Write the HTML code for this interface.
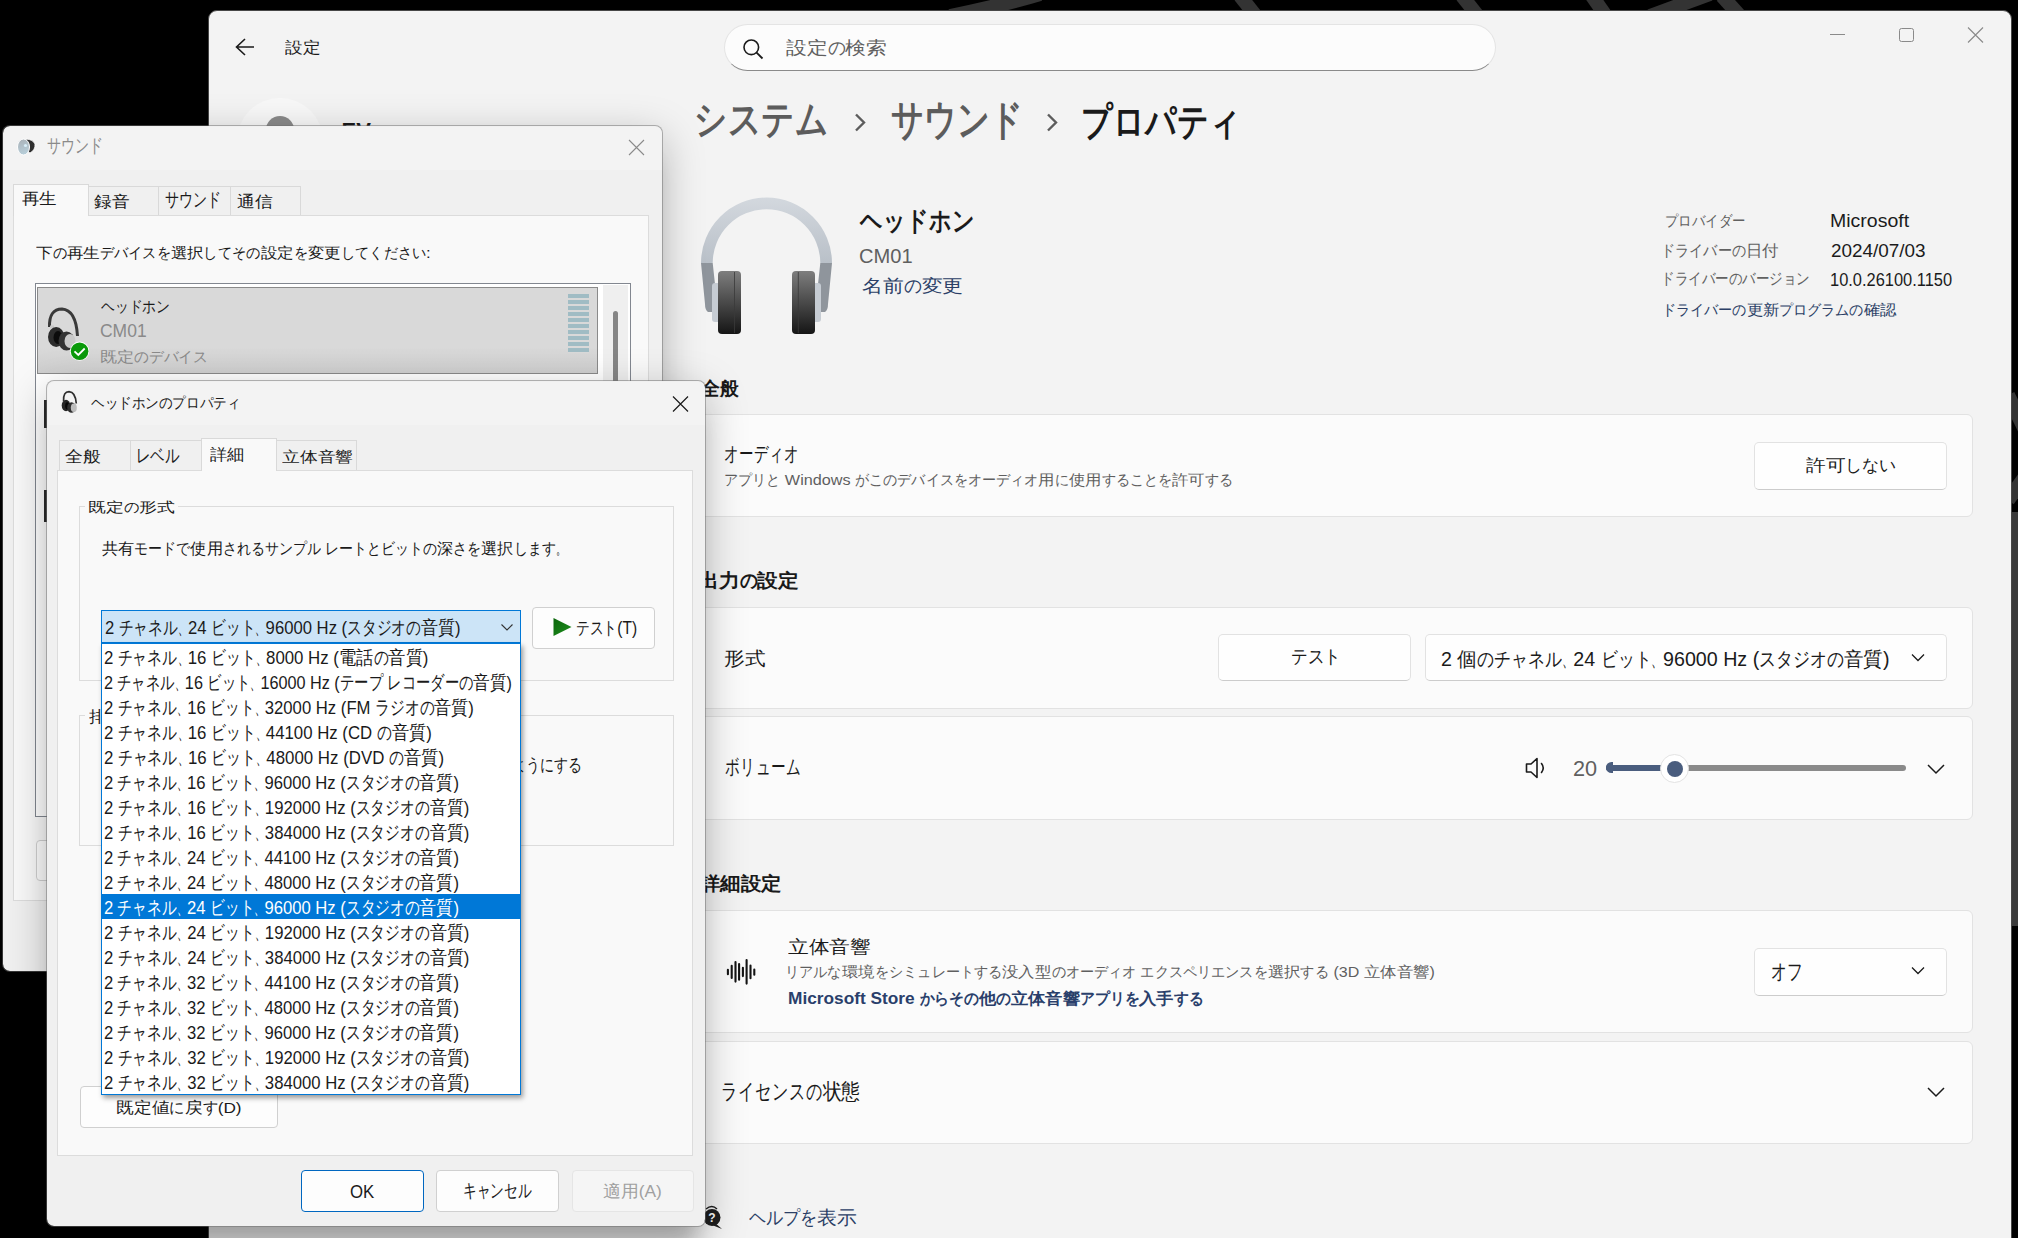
<!DOCTYPE html>
<html lang="ja"><head><meta charset="utf-8"><title>サウンド設定</title>
<style>
html,body{margin:0;padding:0}
body{width:2018px;height:1238px;overflow:hidden;background:#000;position:relative;font-family:"Liberation Sans",sans-serif;color:#1a1a1a}
.a{position:absolute;box-sizing:border-box}
.t{position:absolute;white-space:nowrap;line-height:1;font-style:normal;transform-origin:0 0;left:0;top:0}
/* settings */
#win{left:207.5px;top:10px;width:1804.5px;height:1260px;background:#f3f3f3;border:1.5px solid #474747;border-radius:9px;overflow:hidden}
.card{position:absolute;left:695px;width:1278px;background:#fbfbfb;border:1.5px solid #e2e2e2;border-radius:6px;box-sizing:border-box}
.btn11{position:absolute;background:#fefefe;border:1px solid #e2e2e2;border-bottom-color:#cccccc;border-radius:5px;box-sizing:border-box}
/* classic dialogs */
.dlg{position:absolute;box-sizing:border-box;border:1.5px solid rgba(110,110,110,.5);background-clip:padding-box;border-radius:8px;overflow:hidden;background-color:#f0f0f0;box-shadow:0 12px 42px rgba(0,0,0,.26),0 30px 20px -10px rgba(0,0,0,.18)}
.tab{position:absolute;box-sizing:border-box;background:#f0f0f0;border:1px solid #d9d9d9;border-bottom:none}
.tabsel{background:#f9f9f9}
.panel{position:absolute;box-sizing:border-box;background:#f9f9f9;border:1px solid #dcdcdc}
.gb{position:absolute;box-sizing:border-box;border:1px solid #dcdcdc}
.wbtn{position:absolute;box-sizing:border-box;background:#fdfdfd;border:1px solid #d0d0d0;border-radius:4px}
</style></head><body>

<!-- wallpaper strokes -->
<svg class="a" style="left:0;top:0" width="2018" height="1238">
 <g stroke="#333" stroke-width="14" fill="none">
  <path d="M950 16 Q1000 6 1040 -6"></path>
  <path d="M1240 -4 L1256 16"></path>
  <path d="M1462 -4 L1478 16"></path>
  <path d="M1592 -4 L1606 16"></path>
  <path d="M1650 16 L1710 -6"></path>
  <path d="M1722 -4 L1740 16"></path>
  <path d="M2008 395 L2030 440"></path>
  <path d="M2008 500 L2030 470"></path>
 </g>
</svg>

<div class="a" style="left:2011px;top:512px;width:7px;height:414px;background:#3a3a3a"></div>
<!-- SETTINGS WINDOW -->
<div id="win" class="a"></div>
<!-- title bar -->
<svg class="a" style="left:234px;top:37px" width="22" height="20" viewBox="0 0 22 20"><path d="M11 2 L2.5 10 L11 18 M2.5 10 H20" stroke="#1a1a1a" stroke-width="1.6" fill="none"></path></svg>
<i class="t" style="font-size: 16.16px; color: rgb(26, 26, 26); left: 284.82px; top: 39.04px; transform: scaleX(1.1043);">設定</i>
<!-- search -->
<div class="a" style="left:724px;top:24px;width:772px;height:47px;background:#fcfcfc;border:1px solid #e4e4e4;border-bottom:1.5px solid #8a8a8a;border-radius:24px"></div>
<svg class="a" style="left:742px;top:38px" width="22" height="22" viewBox="0 0 22 22"><circle cx="9.3" cy="9.3" r="7.3" stroke="#1a1a1a" stroke-width="1.6" fill="none"></circle><path d="M14.6 14.6 L20.5 20.5" stroke="#1a1a1a" stroke-width="1.8"></path></svg>
<i class="t" style="font-size: 18.49px; color: rgb(95, 95, 95); left: 785.79px; top: 39.05px; transform: scaleX(1.1539);">設定<span style="display: inline-block; width: 15.48px;"><span style="display: inline-block; transform: scaleX(0.86); transform-origin: 0px 0px;">の</span></span>検索</i>
<!-- window controls -->
<div class="a" style="left:1830px;top:34px;width:15px;height:1px;background:#8a8a8a"></div>
<div class="a" style="left:1899px;top:27.5px;width:15px;height:14.5px;border:1px solid #8a8a8a;border-radius:2.5px"></div>
<svg class="a" style="left:1967px;top:27px" width="17" height="16" viewBox="0 0 17 16"><path d="M1 0.5 L16 15.5 M16 0.5 L1 15.5" stroke="#8a8a8a" stroke-width="1.1"></path></svg>
<!-- nav avatar (mostly hidden) -->
<div class="a" style="left:237px;top:98px;width:86px;height:86px;border-radius:50%;background:#f8f8f8"></div>
<div class="a" style="left:266px;top:116px;width:28px;height:28px;border-radius:50%;background:#8a8a8a"></div>
<i class="t" style="font-size: 22px; font-weight: bold; color: rgb(26, 26, 26); left: 341.57px; top: 119.53px;">EV</i>
<!-- breadcrumb -->
<i class="t" style="font-size: 39.77px; font-weight: bold; color: rgb(92, 92, 92); left: 693.96px; top: 100.43px; transform: scaleX(0.9504);"><span style="display: inline-block; width: 141.04px;"><span style="display: inline-block; transform: scaleX(0.86); transform-origin: 0px 0px;">システム</span></span></i>
<svg class="a" style="left:853px;top:112px" width="14" height="21" viewBox="0 0 14 21"><path d="M3 2.5 L11 10.5 L3 18.5" stroke="#5c5c5c" stroke-width="2.4" fill="none"></path></svg>
<i class="t" style="font-size: 42px; font-weight: bold; color: rgb(92, 92, 92); left: 890.89px; top: 98.83px; transform: scaleX(0.8928);"><span style="display: inline-block; width: 147.92px;"><span style="display: inline-block; transform: scaleX(0.86); transform-origin: 0px 0px;">サウンド</span></span></i>
<svg class="a" style="left:1045px;top:112px" width="14" height="21" viewBox="0 0 14 21"><path d="M3 2.5 L11 10.5 L3 18.5" stroke="#5c5c5c" stroke-width="2.4" fill="none"></path></svg>
<i class="t" style="font-size: 39px; font-weight: bold; color: rgb(26, 26, 26); left: 1080.82px; top: 101.89px; transform: scaleX(0.9294);"><span style="display: inline-block; width: 172px;"><span style="display: inline-block; transform: scaleX(0.86); transform-origin: 0px 0px;">プロパティ</span></span></i>
<!-- headphone image -->
<svg class="a" style="left:696px;top:190px" width="142" height="150" viewBox="696 190 142 150">
 <defs>
  <linearGradient id="band" x1="0" y1="0" x2="0" y2="1"><stop offset="0" stop-color="#d3d8de"></stop><stop offset="1" stop-color="#b9c0c8"></stop></linearGradient>
  <linearGradient id="cup" x1="0" y1="0" x2="0" y2="1"><stop offset="0" stop-color="#7e7e7e"></stop><stop offset="1" stop-color="#151515"></stop></linearGradient>
 </defs>
 <path d="M701 263 A65.5 65.5 0 0 1 832 263 L820.3 263 A53.8 53.8 0 0 0 712.7 263 Z" fill="url(#band)"></path>
 <path d="M701 263 L712.7 263 L718 312 L708 312 Q705 310 705 304 Z" fill="#8f959c"></path>
 <path d="M832 263 L820.3 263 L815 312 L825 312 Q828 310 828 304 Z" fill="#8f959c"></path>
 <rect x="712" y="283" width="9" height="39" rx="3" fill="#c6ccd3"></rect>
 <rect x="812" y="283" width="9" height="39" rx="3" fill="#c6ccd3"></rect>
 <rect x="718" y="271" width="23" height="63" rx="4" fill="url(#cup)"></rect>
 <rect x="792" y="271" width="23" height="63" rx="4" fill="url(#cup)"></rect>
 <path d="M734.5 272 V333 M798.3 272 V333" stroke="#3a3a3a" stroke-width="0.8"></path>
</svg>
<i class="t" style="font-size: 26.92px; font-weight: bold; color: rgb(26, 26, 26); left: 860.14px; top: 207.78px; transform: scaleX(0.9528);"><span style="display: inline-block; width: 120.4px;"><span style="display: inline-block; transform: scaleX(0.86); transform-origin: 0px 0px;">ヘッドホン</span></span></i>
<i class="t" style="font-size: 20.7px; color: rgb(95, 95, 95); left: 859.49px; top: 245.95px; transform: scaleX(0.9715);">CM01</i>
<i class="t" style="font-size: 18.13px; color: rgb(43, 63, 102); left: 862.49px; top: 276.94px; transform: scaleX(1.1571);">名前<span style="display: inline-block; width: 15.48px;"><span style="display: inline-block; transform: scaleX(0.86); transform-origin: 0px 0px;">の</span></span>変更</i>
<!-- info -->
<i class="t" style="font-size: 15px; color: rgb(97, 97, 97); left: 1664.76px; top: 213.46px; transform: scaleX(1.0387);"><span style="display: inline-block; width: 77.4px;"><span style="display: inline-block; transform: scaleX(0.86); transform-origin: 0px 0px;">プロバイダー</span></span></i>
<i class="t" style="font-size: 16.15px; color: rgb(97, 97, 97); left: 1660.84px; top: 242.03px; transform: scaleX(1.0266);"><span style="display: inline-block; width: 82.56px;"><span style="display: inline-block; transform: scaleX(0.86); transform-origin: 0px 0px;">ドライバーの</span></span>日付</i>
<i class="t" style="font-size: 16.36px; color: rgb(97, 97, 97); left: 1660.99px; top: 270.32px; transform: scaleX(0.9818);"><span style="display: inline-block; width: 151.36px;"><span style="display: inline-block; transform: scaleX(0.86); transform-origin: 0px 0px;">ドライバーのバージョン</span></span></i>
<i class="t" style="font-size: 14.93px; color: rgb(43, 63, 102); left: 1662.42px; top: 302.96px; transform: scaleX(1.0929);"><span style="display: inline-block; width: 77.4px;"><span style="display: inline-block; transform: scaleX(0.86); transform-origin: 0px 0px;">ドライバーの</span></span>更新<span style="display: inline-block; width: 77.4px;"><span style="display: inline-block; transform: scaleX(0.86); transform-origin: 0px 0px;">プログラムの</span></span>確認</i>
<i class="t" style="font-size: 17.96px; color: rgb(27, 27, 27); left: 1830.04px; top: 212.8px; transform: scaleX(1.0865);">Microsoft</i>
<i class="t" style="font-size: 18.3px; color: rgb(27, 27, 27); left: 1830.65px; top: 242.16px; transform: scaleX(1.034);">2024/07/03</i>
<i class="t" style="font-size: 18.3px; color: rgb(27, 27, 27); left: 1830.37px; top: 271px; transform: scaleX(0.8987);">10.0.26100.1150</i>
<!-- sections -->
<i class="t" style="font-size: 18.87px; font-weight: bold; color: rgb(26, 26, 26); left: 701.28px; top: 379.86px; transform: scaleX(0.9902);">全般</i>
<div class="card" style="top:414px;height:103px"></div>
<i class="t" style="font-size: 20.82px; color: rgb(26, 26, 26); left: 724.21px; top: 443.55px; transform: scaleX(0.801);"><span style="display: inline-block; width: 93.74px;"><span style="display: inline-block; transform: scaleX(0.86); transform-origin: 0px 0px;">オーディオ</span></span></i>
<i class="t" style="font-size: 14.85px; color: rgb(95, 95, 95); left: 723.6px; top: 472.96px; transform: scaleX(1.0922);"><span style="display: inline-block; width: 51.6px;"><span style="display: inline-block; transform: scaleX(0.86); transform-origin: 0px 0px;">アプリと</span></span> Windows <span style="display: inline-block; width: 167.7px;"><span style="display: inline-block; transform: scaleX(0.86); transform-origin: 0px 0px;">がこのデバイスをオーディオ</span></span>用<span style="display: inline-block; width: 12.9px;"><span style="display: inline-block; transform: scaleX(0.86); transform-origin: 0px 0px;">に</span></span>使用<span style="display: inline-block; width: 64.5px;"><span style="display: inline-block; transform: scaleX(0.86); transform-origin: 0px 0px;">することを</span></span>許可<span style="display: inline-block; width: 25.8px;"><span style="display: inline-block; transform: scaleX(0.86); transform-origin: 0px 0px;">する</span></span></i>
<div class="btn11" style="left:1754px;top:442px;width:193px;height:48px"></div>
<i class="t" style="font-size: 17.14px; color: rgb(26, 26, 26); left: 1806.2px; top: 457.2px; transform: scaleX(1.1589);">許可<span style="display: inline-block; width: 43.86px;"><span style="display: inline-block; transform: scaleX(0.86); transform-origin: 0px 0px;">しない</span></span></i>

<i class="t" style="font-size: 19.23px; font-weight: bold; color: rgb(26, 26, 26); left: 698.05px; top: 571.43px; transform: scaleX(1.0932);">出力<span style="display: inline-block; width: 16.34px;"><span style="display: inline-block; transform: scaleX(0.86); transform-origin: 0px 0px;">の</span></span>設定</i>
<div class="card" style="top:607px;height:102px"></div>
<i class="t" style="font-size: 18.88px; color: rgb(26, 26, 26); left: 724.38px; top: 649.58px; transform: scaleX(1.0878);">形式</i>
<div class="btn11" style="left:1218px;top:634px;width:193px;height:47px"></div>
<i class="t" style="font-size: 19px; color: rgb(26, 26, 26); left: 1290.52px; top: 647.28px; transform: scaleX(1.0144);"><span style="display: inline-block; width: 49.02px;"><span style="display: inline-block; transform: scaleX(0.86); transform-origin: 0px 0px;">テスト</span></span></i>
<div class="btn11" style="left:1425px;top:634px;width:522px;height:47px"></div>
<i class="t" style="font-size: 20px; color: rgb(26, 26, 26); left: 1441.42px; top: 649.05px; transform: scaleX(0.9823);">2 個<span style="display: inline-block; width: 86px;"><span style="display: inline-block; transform: scaleX(0.86); transform-origin: 0px 0px;">のチャネル</span></span><span style="display: inline-block; width: 12px;"><span style="display: inline-block; transform: scaleX(0.6); transform-origin: 0px 0px;">、</span></span>24 <span style="display: inline-block; width: 51.6px;"><span style="display: inline-block; transform: scaleX(0.86); transform-origin: 0px 0px;">ビット</span></span><span style="display: inline-block; width: 12px;"><span style="display: inline-block; transform: scaleX(0.6); transform-origin: 0px 0px;">、</span></span>96000 Hz (<span style="display: inline-block; width: 86px;"><span style="display: inline-block; transform: scaleX(0.86); transform-origin: 0px 0px;">スタジオの</span></span>音質)</i>
<svg class="a" style="left:1910px;top:652px" width="16" height="12" viewBox="0 0 16 12"><path d="M2 2.5 L8 8.5 L14 2.5" stroke="#1a1a1a" stroke-width="1.3" fill="none"></path></svg>

<div class="card" style="top:716px;height:104px"></div>
<i class="t" style="font-size: 21.29px; color: rgb(26, 26, 26); left: 724.55px; top: 757.18px; transform: scaleX(0.8104);"><span style="display: inline-block; width: 93.74px;"><span style="display: inline-block; transform: scaleX(0.86); transform-origin: 0px 0px;">ボリューム</span></span></i>
<svg class="a" style="left:1523px;top:755px" width="26" height="26" viewBox="0 0 26 26"><path d="M3.5 9 H8 L14 3.5 V22.5 L8 17 H3.5 Z" stroke="#1a1a1a" stroke-width="1.6" fill="none" stroke-linejoin="round"></path><path d="M18.5 8.5 Q22 13 18.5 17.5" stroke="#1a1a1a" stroke-width="1.6" fill="none" stroke-linecap="round"></path></svg>
<i class="t" style="font-size: 21.69px; color: rgb(95, 95, 95); left: 1573.12px; top: 757.8px; transform: scaleX(0.9986);">20</i>
<div class="a" style="left:1606px;top:765px;width:300px;height:6px;border-radius:3px;background:#8a8a8a"></div>
<div class="a" style="left:1606px;top:765px;width:70px;height:6px;border-radius:3px;background:#4a5d7e"></div>
<div class="a" style="left:1606px;top:762px;width:6.5px;height:11px;border-radius:5.5px 0 0 5.5px;background:#4a5d7e"></div>
<div class="a" style="left:1660px;top:754px;width:29px;height:29px;border-radius:50%;background:#fff;border:1px solid #e3e3e3;box-sizing:border-box"></div>
<div class="a" style="left:1666.5px;top:760.5px;width:16px;height:16px;border-radius:50%;background:#4a5d7e"></div>
<svg class="a" style="left:1926px;top:762px" width="20" height="14" viewBox="0 0 20 14"><path d="M2 3 L10 11 L18 3" stroke="#1a1a1a" stroke-width="1.5" fill="none"></path></svg>

<i class="t" style="font-size: 19.23px; font-weight: bold; color: rgb(26, 26, 26); left: 700.1px; top: 874.43px; transform: scaleX(1.0726);">詳細設定</i>
<div class="card" style="top:910px;height:123px"></div>
<svg class="a" style="left:715px;top:950px" width="55" height="45" viewBox="0 0 55 45"><path d="M12.9 19.7 V24.3 M16.7 15.7 V27.9 M20.5 12.1 V31.6 M24.1 14.1 V29.7 M27.9 17.7 V26.1 M31.6 10.1 V33.6 M35.5 15.5 V28.3 M39.3 19.5 V24.7" stroke="#141414" stroke-width="2.1" stroke-linecap="round" fill="none"></path></svg>
<i class="t" style="font-size: 17.66px; color: rgb(26, 26, 26); left: 788px; top: 938.84px; transform: scaleX(1.1502);">立体音響</i>
<i class="t" style="font-size: 14.62px; color: rgb(95, 95, 95); left: 785.13px; top: 964.84px; transform: scaleX(1.0968);"><span style="display: inline-block; width: 51.6px;"><span style="display: inline-block; transform: scaleX(0.86); transform-origin: 0px 0px;">リアルな</span></span>環境<span style="display: inline-block; width: 116.1px;"><span style="display: inline-block; transform: scaleX(0.86); transform-origin: 0px 0px;">をシミュレートする</span></span>没入型<span style="display: inline-block; width: 77.4px;"><span style="display: inline-block; transform: scaleX(0.86); transform-origin: 0px 0px;">のオーディオ</span></span> <span style="display: inline-block; width: 116.1px;"><span style="display: inline-block; transform: scaleX(0.86); transform-origin: 0px 0px;">エクスペリエンスを</span></span>選択<span style="display: inline-block; width: 25.8px;"><span style="display: inline-block; transform: scaleX(0.86); transform-origin: 0px 0px;">する</span></span> (3D 立体音響)</i>
<i class="t" style="font-size: 16px; font-weight: bold; color: rgb(42, 63, 107); left: 788.48px; top: 991.44px; transform: scaleX(1.0787);">Microsoft Store <span style="display: inline-block; width: 55.04px;"><span style="display: inline-block; transform: scaleX(0.86); transform-origin: 0px 0px;">からその</span></span>他<span style="display: inline-block; width: 13.76px;"><span style="display: inline-block; transform: scaleX(0.86); transform-origin: 0px 0px;">の</span></span>立体音響<span style="display: inline-block; width: 55.04px;"><span style="display: inline-block; transform: scaleX(0.86); transform-origin: 0px 0px;">アプリを</span></span>入手<span style="display: inline-block; width: 27.52px;"><span style="display: inline-block; transform: scaleX(0.86); transform-origin: 0px 0px;">する</span></span></i>
<div class="btn11" style="left:1754px;top:948px;width:193px;height:48px"></div>
<i class="t" style="font-size: 21.83px; color: rgb(26, 26, 26); left: 1770.54px; top: 960.7px; transform: scaleX(0.8305);"><span style="display: inline-block; width: 39.56px;"><span style="display: inline-block; transform: scaleX(0.86); transform-origin: 0px 0px;">オフ</span></span></i>
<svg class="a" style="left:1910px;top:965px" width="16" height="12" viewBox="0 0 16 12"><path d="M2 2.5 L8 8.5 L14 2.5" stroke="#1a1a1a" stroke-width="1.3" fill="none"></path></svg>

<div class="card" style="top:1041px;height:103px"></div>
<i class="t" style="font-size: 21.85px; color: rgb(26, 26, 26); left: 721.41px; top: 1081.43px; transform: scaleX(0.8556);"><span style="display: inline-block; width: 118.68px;"><span style="display: inline-block; transform: scaleX(0.86); transform-origin: 0px 0px;">ライセンスの</span></span>状態</i>
<svg class="a" style="left:1926px;top:1085px" width="20" height="14" viewBox="0 0 20 14"><path d="M2 3 L10 11 L18 3" stroke="#1a1a1a" stroke-width="1.5" fill="none"></path></svg>

<svg class="a" style="left:700px;top:1202px" width="24" height="30" viewBox="0 0 24 30"><circle cx="12" cy="15.5" r="8.5" fill="#1f1f1f"></circle><path d="M14 20 L22 27 L12 23 Z" fill="#1f1f1f"></path><path d="M6 7 Q12 2 17 7" stroke="#1f1f1f" stroke-width="1.4" fill="none"></path><text x="12" y="20" font-size="12" font-weight="bold" text-anchor="middle" fill="#fff" font-family="Liberation Sans">?</text></svg>
<i class="t" style="font-size: 19.21px; color: rgb(43, 63, 102); left: 748.71px; top: 1207.95px; transform: scaleX(1.0446);"><span style="display: inline-block; width: 65.36px;"><span style="display: inline-block; transform: scaleX(0.86); transform-origin: 0px 0px;">ヘルプを</span></span>表示</i>


<!-- SOUND DIALOG -->
<div id="snd" class="dlg" style="left:2px;top:125px;width:661px;height:847px"></div>
<div class="a" style="left:3.5px;top:126.5px;width:658px;height:43.5px;background:#f3f3f3;border-radius:7px 7px 0 0"></div>
<svg class="a" style="left:14px;top:134px" width="24" height="26" viewBox="14 134 24 26">
 <defs><linearGradient id="cone" x1="0" y1="0" x2="0.3" y2="1"><stop offset="0" stop-color="#a9b0b6"></stop><stop offset="1" stop-color="#b7cdd8"></stop></linearGradient></defs>
 <path d="M26 139 Q33 139.5 35 144 Q35.5 150 30 153 L27 151 Z" fill="#2e2e2e" stroke="#fff" stroke-width="0.8"></path>
 <ellipse cx="23.5" cy="147" rx="6" ry="8" fill="url(#cone)" stroke="#fff" stroke-width="1"></ellipse>
 <circle cx="25.5" cy="145.5" r="1.6" fill="#d8eef8"></circle>
</svg>
<i class="t" style="font-size: 18.66px; color: rgb(138, 138, 138); left: 47.05px; top: 136.59px; transform: scaleX(0.856);"><span style="display: inline-block; width: 65.36px;"><span style="display: inline-block; transform: scaleX(0.86); transform-origin: 0px 0px;">サウンド</span></span></i>
<svg class="a" style="left:628px;top:139px" width="17" height="17" viewBox="0 0 17 17"><path d="M1 1 L16 16 M16 1 L1 16" stroke="#8a8a8a" stroke-width="1.1"></path></svg>
<!-- tabs -->
<div class="panel" style="left:13px;top:215px;width:636px;height:686px"></div>
<div class="tab" style="left:88px;top:186px;width:71px;height:29px"></div>
<div class="tab" style="left:158px;top:186px;width:73px;height:29px"></div>
<div class="tab" style="left:230px;top:186px;width:71px;height:29px"></div>
<div class="tab tabsel" style="left:13px;top:184px;width:76px;height:32px"></div>
<i class="t" style="font-size: 15.81px; color: rgb(26, 26, 26); left: 21.74px; top: 191.34px; transform: scaleX(1.0922);">再生</i>
<i class="t" style="font-size: 16.12px; color: rgb(26, 26, 26); left: 93.51px; top: 193.34px; transform: scaleX(1.1031);">録音</i>
<i class="t" style="font-size: 18.55px; color: rgb(26, 26, 26); left: 165.15px; top: 190.6px; transform: scaleX(0.8558);"><span style="display: inline-block; width: 65.36px;"><span style="display: inline-block; transform: scaleX(0.86); transform-origin: 0px 0px;">サウンド</span></span></i>
<i class="t" style="font-size: 16.37px; color: rgb(26, 26, 26); left: 236.94px; top: 193.01px; transform: scaleX(1.1126);">通信</i>
<i class="t" style="font-size: 15.22px; color: rgb(26, 26, 26); left: 36.15px; top: 244.61px; transform: scaleX(1.1012);">下<span style="display: inline-block; width: 12.9px;"><span style="display: inline-block; transform: scaleX(0.86); transform-origin: 0px 0px;">の</span></span>再生<span style="display: inline-block; width: 64.5px;"><span style="display: inline-block; transform: scaleX(0.86); transform-origin: 0px 0px;">デバイスを</span></span>選択<span style="display: inline-block; width: 51.6px;"><span style="display: inline-block; transform: scaleX(0.86); transform-origin: 0px 0px;">してその</span></span>設定<span style="display: inline-block; width: 12.9px;"><span style="display: inline-block; transform: scaleX(0.86); transform-origin: 0px 0px;">を</span></span>変更<span style="display: inline-block; width: 77.4px;"><span style="display: inline-block; transform: scaleX(0.86); transform-origin: 0px 0px;">してください</span></span>:</i>
<!-- listbox -->
<div class="a" style="left:35px;top:283px;width:596px;height:534px;background:#fff;border:1px solid #828790"></div>
<div class="a" style="left:603px;top:285px;width:25px;height:531px;background:#efefef"></div>
<div class="a" style="left:613px;top:311px;width:5px;height:520px;background:#858585;border-radius:3px"></div>
<div class="a" style="left:37px;top:287px;width:561px;height:87px;background:linear-gradient(#d9d9d9 70%,#cfcfcf);border:1px solid #8a8a8a"></div>
<div class="a" style="left:568px;top:294px;width:21px;height:59px;background:repeating-linear-gradient(#a0bcc4 0 4px,#d9d9d9 4px 6px)"></div>
<svg class="a" style="left:44px;top:304px" width="46" height="58" viewBox="44 304 46 58">
 <path d="M49.5 327 Q49 309 62 309 Q76 310 77.5 336" stroke="#3a3a3a" stroke-width="3" fill="none"></path>
 <path d="M50 327 L54 327" stroke="#c8c8c8" stroke-width="3"></path>
 <ellipse cx="56.2" cy="337" rx="8.2" ry="9.9" fill="#2c2c2c"></ellipse>
 <ellipse cx="58" cy="337.5" rx="4.5" ry="6.5" fill="#0c0c0c"></ellipse>
 <ellipse cx="66.5" cy="341" rx="8" ry="9.5" fill="#333"></ellipse>
 <ellipse cx="70" cy="341" rx="5.5" ry="7" fill="#c9c9c9"></ellipse>
 <circle cx="79.6" cy="351.2" r="9.6" fill="#fff"></circle>
 <circle cx="79.6" cy="351.2" r="8.8" fill="#0a9a0a"></circle>
 <path d="M74.5 351.3 L78.3 355 L84.7 348.5" stroke="#fff" stroke-width="1.8" fill="none"></path>
</svg>
<i class="t" style="font-size: 16.34px; color: rgb(26, 26, 26); left: 101.23px; top: 298.02px; transform: scaleX(1.0036);"><span style="display: inline-block; width: 68.8px;"><span style="display: inline-block; transform: scaleX(0.86); transform-origin: 0px 0px;">ヘッドホン</span></span></i>
<i class="t" style="font-size: 18.31px; color: rgb(138, 138, 138); left: 100.43px; top: 322.3px; transform: scaleX(0.9547);">CM01</i>
<i class="t" style="font-size: 15.05px; color: rgb(138, 138, 138); left: 100.27px; top: 348.64px; transform: scaleX(1.1397);">既定<span style="display: inline-block; width: 64.5px;"><span style="display: inline-block; transform: scaleX(0.86); transform-origin: 0px 0px;">のデバイス</span></span></i>
<div class="a" style="left:44px;top:400px;width:3px;height:28px;background:#2a2a2a"></div>
<div class="a" style="left:44px;top:490px;width:3px;height:32px;background:#2a2a2a"></div>
<div class="wbtn" style="left:36px;top:840px;width:120px;height:41px"></div>

<!-- PROPERTIES DIALOG -->
<div id="prop" class="dlg" style="left:46px;top:380px;width:660px;height:847px"></div>
<div class="a" style="left:47.5px;top:381.5px;width:657px;height:43.5px;background:#f3f3f3;border-radius:7px 7px 0 0"></div>
<svg class="a" style="left:58px;top:389px" width="24" height="27" viewBox="58 389 24 27">
 <path d="M63.6 401 Q63.2 391.6 69 391.6 Q75.5 392 76.3 403.5" stroke="#2e2e2e" stroke-width="1.7" fill="none"></path>
 <ellipse cx="66" cy="405.5" rx="4.3" ry="5.8" fill="#262626"></ellipse>
 <ellipse cx="67.3" cy="405.8" rx="2.2" ry="3.6" fill="#080808"></ellipse>
 <ellipse cx="71.5" cy="407.5" rx="4.3" ry="5.3" fill="#2e2e2e"></ellipse>
 <ellipse cx="73.8" cy="407.8" rx="3" ry="4.3" fill="#bdbdbd"></ellipse>
</svg>
<i class="t" style="font-size: 15.38px; color: rgb(26, 26, 26); left: 91.43px; top: 394.96px; transform: scaleX(1.0518);"><span style="display: inline-block; width: 141.9px;"><span style="display: inline-block; transform: scaleX(0.86); transform-origin: 0px 0px;">ヘッドホンのプロパティ</span></span></i>
<svg class="a" style="left:672px;top:395.5px" width="17" height="16" viewBox="0 0 17 16"><path d="M1 0.5 L16 15.5 M16 0.5 L1 15.5" stroke="#1a1a1a" stroke-width="1.2"></path></svg>
<div class="panel" style="left:57px;top:470px;width:636px;height:686px"></div>
<div class="tab" style="left:59px;top:440px;width:72px;height:30px"></div>
<div class="tab" style="left:130px;top:440px;width:72px;height:30px"></div>
<div class="tab" style="left:276px;top:440px;width:81px;height:30px"></div>
<div class="tab tabsel" style="left:201px;top:438px;width:76px;height:33px"></div>
<i class="t" style="font-size: 16.24px; color: rgb(26, 26, 26); left: 65.43px; top: 447.97px; transform: scaleX(1.1158);">全般</i>
<i class="t" style="font-size: 19.24px; color: rgb(26, 26, 26); left: 135.85px; top: 446.05px; transform: scaleX(0.8861);"><span style="display: inline-block; width: 49.02px;"><span style="display: inline-block; transform: scaleX(0.86); transform-origin: 0px 0px;">レベル</span></span></i>
<i class="t" style="font-size: 16.17px; color: rgb(26, 26, 26); left: 210.03px; top: 446.02px; transform: scaleX(1.0775);">詳細</i>
<i class="t" style="font-size: 15.33px; color: rgb(26, 26, 26); left: 281.63px; top: 448.54px; transform: scaleX(1.185);">立体音響</i>
<!-- group 1 -->
<div class="gb" style="left:79px;top:506px;width:595px;height:175px"></div>
<div class="a" style="left:85px;top:498px;width:93px;height:18px;background:#f9f9f9"></div>
<i class="t" style="font-size: 14.46px; color: rgb(26, 26, 26); left: 87.79px; top: 499.94px; transform: scaleX(1.2773);">既定<span style="display: inline-block; width: 12.04px;"><span style="display: inline-block; transform: scaleX(0.86); transform-origin: 0px 0px;">の</span></span>形式</i>
<i class="t" style="font-size: 16.41px; color: rgb(26, 26, 26); left: 101.75px; top: 539.96px; transform: scaleX(1.0147);">共有<span style="display: inline-block; width: 55.04px;"><span style="display: inline-block; transform: scaleX(0.86); transform-origin: 0px 0px;">モードで</span></span>使用<span style="display: inline-block; width: 96.32px;"><span style="display: inline-block; transform: scaleX(0.86); transform-origin: 0px 0px;">されるサンプル</span></span> <span style="display: inline-block; width: 110.08px;"><span style="display: inline-block; transform: scaleX(0.86); transform-origin: 0px 0px;">レートとビットの</span></span>深<span style="display: inline-block; width: 27.52px;"><span style="display: inline-block; transform: scaleX(0.86); transform-origin: 0px 0px;">さを</span></span>選択<span style="display: inline-block; width: 41.28px;"><span style="display: inline-block; transform: scaleX(0.86); transform-origin: 0px 0px;">します</span></span><span style="display: inline-block; width: 9.6px;"><span style="display: inline-block; transform: scaleX(0.6); transform-origin: 0px 0px;">。</span></span></i>
<div class="a" style="left:101px;top:610px;width:420px;height:33px;background:#cce4f7;border:1px solid #0078d7"></div>
<i class="t" style="font-size: 18.5px; color: rgb(26, 26, 26); left: 104.57px; top: 619.32px; transform: scaleX(0.9008);">2 <span style="display: inline-block; width: 65.36px;"><span style="display: inline-block; transform: scaleX(0.86); transform-origin: 0px 0px;">チャネル</span></span><span style="display: inline-block; width: 11.4px;"><span style="display: inline-block; transform: scaleX(0.6); transform-origin: 0px 0px;">、</span></span>24 <span style="display: inline-block; width: 49.02px;"><span style="display: inline-block; transform: scaleX(0.86); transform-origin: 0px 0px;">ビット</span></span><span style="display: inline-block; width: 11.4px;"><span style="display: inline-block; transform: scaleX(0.6); transform-origin: 0px 0px;">、</span></span>96000 Hz (<span style="display: inline-block; width: 81.7px;"><span style="display: inline-block; transform: scaleX(0.86); transform-origin: 0px 0px;">スタジオの</span></span>音質)</i>
<svg class="a" style="left:500px;top:622px" width="14" height="10" viewBox="0 0 14 10"><path d="M1.5 2.5 L7 8 L12.5 2.5" stroke="#333" stroke-width="1.1" fill="none"></path></svg>
<div class="wbtn" style="left:531.5px;top:607px;width:123px;height:42px"></div>
<svg class="a" style="left:552px;top:617px" width="21" height="20" viewBox="0 0 21 20"><defs><linearGradient id="gtri" x1="0" y1="0" x2="1" y2="1"><stop offset="0" stop-color="#0a650a"></stop><stop offset="1" stop-color="#1f8f1f"></stop></linearGradient></defs><path d="M1.5 1 L19.5 10 L1.5 19 Z" fill="url(#gtri)"></path></svg>
<i class="t" style="font-size: 17.5px; color: rgb(26, 26, 26); left: 575.83px; top: 620.17px; transform: scaleX(0.888);"><span style="display: inline-block; width: 46.44px;"><span style="display: inline-block; transform: scaleX(0.86); transform-origin: 0px 0px;">テスト</span></span>(T)</i>
<!-- group 2 -->
<div class="gb" style="left:79px;top:715px;width:595px;height:131px"></div>
<div class="a" style="left:85px;top:707px;width:20px;height:18px;background:#f9f9f9"></div>
<i class="t" style="font-size: 15.5px; color: rgb(26, 26, 26); left: 89px; top: 708.57px; transform: scaleX(1.1961);">排他<span style="display: inline-block; width: 41.28px;"><span style="display: inline-block; transform: scaleX(0.86); transform-origin: 0px 0px;">モード</span></span></i>
<i class="t" style="font-size: 17.5px; color: rgb(26, 26, 26); left: 512.37px; top: 757.34px; transform: scaleX(0.9017);"><span style="display: inline-block; width: 77.4px;"><span style="display: inline-block; transform: scaleX(0.86); transform-origin: 0px 0px;">ようにする</span></span></i>
<div class="wbtn" style="left:80px;top:1086px;width:198px;height:42px"></div>
<i class="t" style="font-size: 15.5px; color: rgb(26, 26, 26); left: 116.47px; top: 1100.04px; transform: scaleX(1.1109);">既定値<span style="display: inline-block; width: 13.76px;"><span style="display: inline-block; transform: scaleX(0.86); transform-origin: 0px 0px;">に</span></span>戻<span style="display: inline-block; width: 13.76px;"><span style="display: inline-block; transform: scaleX(0.86); transform-origin: 0px 0px;">す</span></span>(D)</i>
<div class="wbtn" style="left:301px;top:1170px;width:123px;height:42px;border-color:#0067c0"></div>
<i class="t" style="font-size: 19.01px; color: rgb(26, 26, 26); left: 349.84px; top: 1182.1px; transform: scaleX(0.8842);">OK</i>
<div class="wbtn" style="left:436px;top:1170px;width:123px;height:42px"></div>
<i class="t" style="font-size: 19.42px; color: rgb(26, 26, 26); left: 462.64px; top: 1180.92px; transform: scaleX(0.8404);"><span style="display: inline-block; width: 81.7px;"><span style="display: inline-block; transform: scaleX(0.86); transform-origin: 0px 0px;">キャンセル</span></span></i>
<div class="wbtn" style="left:571.5px;top:1170px;width:122px;height:42px;background:#f5f5f5;border-color:#e5e5e5"></div>
<i class="t" style="font-size: 16.5px; color: rgb(160, 160, 160); left: 602.87px; top: 1183.24px; transform: scaleX(1.0489);">適用(A)</i>

<!-- DROPDOWN LIST -->
<div id="list" class="a" style="left:101px;top:643px;width:420px;height:452px;background:#fff;border:1px solid #0078d7;box-shadow:2px 3px 5px rgba(0,0,0,.38)"></div>
<div class="a" style="left:102px;top:894px;width:418px;height:25px;background:#0078d7"></div>
<i class="t" style="font-size: 18.5px; color: rgb(26, 26, 26); left: 103.96px; top: 649.32px; transform: scaleX(0.9087);">2 <span style="display: inline-block; width: 65.36px;"><span style="display: inline-block; transform: scaleX(0.86); transform-origin: 0px 0px;">チャネル</span></span><span style="display: inline-block; width: 11.4px;"><span style="display: inline-block; transform: scaleX(0.6); transform-origin: 0px 0px;">、</span></span>16 <span style="display: inline-block; width: 49.02px;"><span style="display: inline-block; transform: scaleX(0.86); transform-origin: 0px 0px;">ビット</span></span><span style="display: inline-block; width: 11.4px;"><span style="display: inline-block; transform: scaleX(0.6); transform-origin: 0px 0px;">、</span></span>8000 Hz (電話<span style="display: inline-block; width: 16.34px;"><span style="display: inline-block; transform: scaleX(0.86); transform-origin: 0px 0px;">の</span></span>音質)</i>
<i class="t" style="font-size: 18.5px; color: rgb(26, 26, 26); left: 103.99px; top: 674.32px; transform: scaleX(0.8771);">2 <span style="display: inline-block; width: 65.36px;"><span style="display: inline-block; transform: scaleX(0.86); transform-origin: 0px 0px;">チャネル</span></span><span style="display: inline-block; width: 11.4px;"><span style="display: inline-block; transform: scaleX(0.6); transform-origin: 0px 0px;">、</span></span>16 <span style="display: inline-block; width: 49.02px;"><span style="display: inline-block; transform: scaleX(0.86); transform-origin: 0px 0px;">ビット</span></span><span style="display: inline-block; width: 11.4px;"><span style="display: inline-block; transform: scaleX(0.6); transform-origin: 0px 0px;">、</span></span>16000 Hz (<span style="display: inline-block; width: 49.02px;"><span style="display: inline-block; transform: scaleX(0.86); transform-origin: 0px 0px;">テープ</span></span> <span style="display: inline-block; width: 98.04px;"><span style="display: inline-block; transform: scaleX(0.86); transform-origin: 0px 0px;">レコーダーの</span></span>音質)</i>
<i class="t" style="font-size: 18.5px; color: rgb(26, 26, 26); left: 103.97px; top: 699.32px; transform: scaleX(0.9017);">2 <span style="display: inline-block; width: 65.36px;"><span style="display: inline-block; transform: scaleX(0.86); transform-origin: 0px 0px;">チャネル</span></span><span style="display: inline-block; width: 11.4px;"><span style="display: inline-block; transform: scaleX(0.6); transform-origin: 0px 0px;">、</span></span>16 <span style="display: inline-block; width: 49.02px;"><span style="display: inline-block; transform: scaleX(0.86); transform-origin: 0px 0px;">ビット</span></span><span style="display: inline-block; width: 11.4px;"><span style="display: inline-block; transform: scaleX(0.6); transform-origin: 0px 0px;">、</span></span>32000 Hz (FM <span style="display: inline-block; width: 65.36px;"><span style="display: inline-block; transform: scaleX(0.86); transform-origin: 0px 0px;">ラジオの</span></span>音質)</i>
<i class="t" style="font-size: 18.5px; color: rgb(26, 26, 26); left: 103.96px; top: 724.32px; transform: scaleX(0.9075);">2 <span style="display: inline-block; width: 65.36px;"><span style="display: inline-block; transform: scaleX(0.86); transform-origin: 0px 0px;">チャネル</span></span><span style="display: inline-block; width: 11.4px;"><span style="display: inline-block; transform: scaleX(0.6); transform-origin: 0px 0px;">、</span></span>16 <span style="display: inline-block; width: 49.02px;"><span style="display: inline-block; transform: scaleX(0.86); transform-origin: 0px 0px;">ビット</span></span><span style="display: inline-block; width: 11.4px;"><span style="display: inline-block; transform: scaleX(0.6); transform-origin: 0px 0px;">、</span></span>44100 Hz (CD <span style="display: inline-block; width: 16.34px;"><span style="display: inline-block; transform: scaleX(0.86); transform-origin: 0px 0px;">の</span></span>音質)</i>
<i class="t" style="font-size: 18.5px; color: rgb(26, 26, 26); left: 103.96px; top: 749.32px; transform: scaleX(0.9105);">2 <span style="display: inline-block; width: 65.36px;"><span style="display: inline-block; transform: scaleX(0.86); transform-origin: 0px 0px;">チャネル</span></span><span style="display: inline-block; width: 11.4px;"><span style="display: inline-block; transform: scaleX(0.6); transform-origin: 0px 0px;">、</span></span>16 <span style="display: inline-block; width: 49.02px;"><span style="display: inline-block; transform: scaleX(0.86); transform-origin: 0px 0px;">ビット</span></span><span style="display: inline-block; width: 11.4px;"><span style="display: inline-block; transform: scaleX(0.6); transform-origin: 0px 0px;">、</span></span>48000 Hz (DVD <span style="display: inline-block; width: 16.34px;"><span style="display: inline-block; transform: scaleX(0.86); transform-origin: 0px 0px;">の</span></span>音質)</i>
<i class="t" style="font-size: 18.5px; color: rgb(26, 26, 26); left: 103.97px; top: 774.32px; transform: scaleX(0.8997);">2 <span style="display: inline-block; width: 65.36px;"><span style="display: inline-block; transform: scaleX(0.86); transform-origin: 0px 0px;">チャネル</span></span><span style="display: inline-block; width: 11.4px;"><span style="display: inline-block; transform: scaleX(0.6); transform-origin: 0px 0px;">、</span></span>16 <span style="display: inline-block; width: 49.02px;"><span style="display: inline-block; transform: scaleX(0.86); transform-origin: 0px 0px;">ビット</span></span><span style="display: inline-block; width: 11.4px;"><span style="display: inline-block; transform: scaleX(0.6); transform-origin: 0px 0px;">、</span></span>96000 Hz (<span style="display: inline-block; width: 81.7px;"><span style="display: inline-block; transform: scaleX(0.86); transform-origin: 0px 0px;">スタジオの</span></span>音質)</i>
<i class="t" style="font-size: 18.5px; color: rgb(26, 26, 26); left: 103.97px; top: 799.32px; transform: scaleX(0.9022);">2 <span style="display: inline-block; width: 65.36px;"><span style="display: inline-block; transform: scaleX(0.86); transform-origin: 0px 0px;">チャネル</span></span><span style="display: inline-block; width: 11.4px;"><span style="display: inline-block; transform: scaleX(0.6); transform-origin: 0px 0px;">、</span></span>16 <span style="display: inline-block; width: 49.02px;"><span style="display: inline-block; transform: scaleX(0.86); transform-origin: 0px 0px;">ビット</span></span><span style="display: inline-block; width: 11.4px;"><span style="display: inline-block; transform: scaleX(0.6); transform-origin: 0px 0px;">、</span></span>192000 Hz (<span style="display: inline-block; width: 81.7px;"><span style="display: inline-block; transform: scaleX(0.86); transform-origin: 0px 0px;">スタジオの</span></span>音質)</i>
<i class="t" style="font-size: 18.5px; color: rgb(26, 26, 26); left: 103.97px; top: 824.32px; transform: scaleX(0.9022);">2 <span style="display: inline-block; width: 65.36px;"><span style="display: inline-block; transform: scaleX(0.86); transform-origin: 0px 0px;">チャネル</span></span><span style="display: inline-block; width: 11.4px;"><span style="display: inline-block; transform: scaleX(0.6); transform-origin: 0px 0px;">、</span></span>16 <span style="display: inline-block; width: 49.02px;"><span style="display: inline-block; transform: scaleX(0.86); transform-origin: 0px 0px;">ビット</span></span><span style="display: inline-block; width: 11.4px;"><span style="display: inline-block; transform: scaleX(0.6); transform-origin: 0px 0px;">、</span></span>384000 Hz (<span style="display: inline-block; width: 81.7px;"><span style="display: inline-block; transform: scaleX(0.86); transform-origin: 0px 0px;">スタジオの</span></span>音質)</i>
<i class="t" style="font-size: 18.5px; color: rgb(26, 26, 26); left: 103.97px; top: 849.32px; transform: scaleX(0.8997);">2 <span style="display: inline-block; width: 65.36px;"><span style="display: inline-block; transform: scaleX(0.86); transform-origin: 0px 0px;">チャネル</span></span><span style="display: inline-block; width: 11.4px;"><span style="display: inline-block; transform: scaleX(0.6); transform-origin: 0px 0px;">、</span></span>24 <span style="display: inline-block; width: 49.02px;"><span style="display: inline-block; transform: scaleX(0.86); transform-origin: 0px 0px;">ビット</span></span><span style="display: inline-block; width: 11.4px;"><span style="display: inline-block; transform: scaleX(0.6); transform-origin: 0px 0px;">、</span></span>44100 Hz (<span style="display: inline-block; width: 81.7px;"><span style="display: inline-block; transform: scaleX(0.86); transform-origin: 0px 0px;">スタジオの</span></span>音質)</i>
<i class="t" style="font-size: 18.5px; color: rgb(26, 26, 26); left: 103.97px; top: 874.32px; transform: scaleX(0.8997);">2 <span style="display: inline-block; width: 65.36px;"><span style="display: inline-block; transform: scaleX(0.86); transform-origin: 0px 0px;">チャネル</span></span><span style="display: inline-block; width: 11.4px;"><span style="display: inline-block; transform: scaleX(0.6); transform-origin: 0px 0px;">、</span></span>24 <span style="display: inline-block; width: 49.02px;"><span style="display: inline-block; transform: scaleX(0.86); transform-origin: 0px 0px;">ビット</span></span><span style="display: inline-block; width: 11.4px;"><span style="display: inline-block; transform: scaleX(0.6); transform-origin: 0px 0px;">、</span></span>48000 Hz (<span style="display: inline-block; width: 81.7px;"><span style="display: inline-block; transform: scaleX(0.86); transform-origin: 0px 0px;">スタジオの</span></span>音質)</i>
<i class="t" style="font-size: 18.5px; color: rgb(255, 255, 255); left: 103.97px; top: 899.32px; transform: scaleX(0.8997);">2 <span style="display: inline-block; width: 65.36px;"><span style="display: inline-block; transform: scaleX(0.86); transform-origin: 0px 0px;">チャネル</span></span><span style="display: inline-block; width: 11.4px;"><span style="display: inline-block; transform: scaleX(0.6); transform-origin: 0px 0px;">、</span></span>24 <span style="display: inline-block; width: 49.02px;"><span style="display: inline-block; transform: scaleX(0.86); transform-origin: 0px 0px;">ビット</span></span><span style="display: inline-block; width: 11.4px;"><span style="display: inline-block; transform: scaleX(0.6); transform-origin: 0px 0px;">、</span></span>96000 Hz (<span style="display: inline-block; width: 81.7px;"><span style="display: inline-block; transform: scaleX(0.86); transform-origin: 0px 0px;">スタジオの</span></span>音質)</i>
<i class="t" style="font-size: 18.5px; color: rgb(26, 26, 26); left: 103.97px; top: 924.32px; transform: scaleX(0.9022);">2 <span style="display: inline-block; width: 65.36px;"><span style="display: inline-block; transform: scaleX(0.86); transform-origin: 0px 0px;">チャネル</span></span><span style="display: inline-block; width: 11.4px;"><span style="display: inline-block; transform: scaleX(0.6); transform-origin: 0px 0px;">、</span></span>24 <span style="display: inline-block; width: 49.02px;"><span style="display: inline-block; transform: scaleX(0.86); transform-origin: 0px 0px;">ビット</span></span><span style="display: inline-block; width: 11.4px;"><span style="display: inline-block; transform: scaleX(0.6); transform-origin: 0px 0px;">、</span></span>192000 Hz (<span style="display: inline-block; width: 81.7px;"><span style="display: inline-block; transform: scaleX(0.86); transform-origin: 0px 0px;">スタジオの</span></span>音質)</i>
<i class="t" style="font-size: 18.5px; color: rgb(26, 26, 26); left: 103.97px; top: 949.32px; transform: scaleX(0.9022);">2 <span style="display: inline-block; width: 65.36px;"><span style="display: inline-block; transform: scaleX(0.86); transform-origin: 0px 0px;">チャネル</span></span><span style="display: inline-block; width: 11.4px;"><span style="display: inline-block; transform: scaleX(0.6); transform-origin: 0px 0px;">、</span></span>24 <span style="display: inline-block; width: 49.02px;"><span style="display: inline-block; transform: scaleX(0.86); transform-origin: 0px 0px;">ビット</span></span><span style="display: inline-block; width: 11.4px;"><span style="display: inline-block; transform: scaleX(0.6); transform-origin: 0px 0px;">、</span></span>384000 Hz (<span style="display: inline-block; width: 81.7px;"><span style="display: inline-block; transform: scaleX(0.86); transform-origin: 0px 0px;">スタジオの</span></span>音質)</i>
<i class="t" style="font-size: 18.5px; color: rgb(26, 26, 26); left: 103.97px; top: 974.32px; transform: scaleX(0.8997);">2 <span style="display: inline-block; width: 65.36px;"><span style="display: inline-block; transform: scaleX(0.86); transform-origin: 0px 0px;">チャネル</span></span><span style="display: inline-block; width: 11.4px;"><span style="display: inline-block; transform: scaleX(0.6); transform-origin: 0px 0px;">、</span></span>32 <span style="display: inline-block; width: 49.02px;"><span style="display: inline-block; transform: scaleX(0.86); transform-origin: 0px 0px;">ビット</span></span><span style="display: inline-block; width: 11.4px;"><span style="display: inline-block; transform: scaleX(0.6); transform-origin: 0px 0px;">、</span></span>44100 Hz (<span style="display: inline-block; width: 81.7px;"><span style="display: inline-block; transform: scaleX(0.86); transform-origin: 0px 0px;">スタジオの</span></span>音質)</i>
<i class="t" style="font-size: 18.5px; color: rgb(26, 26, 26); left: 103.97px; top: 999.32px; transform: scaleX(0.8997);">2 <span style="display: inline-block; width: 65.36px;"><span style="display: inline-block; transform: scaleX(0.86); transform-origin: 0px 0px;">チャネル</span></span><span style="display: inline-block; width: 11.4px;"><span style="display: inline-block; transform: scaleX(0.6); transform-origin: 0px 0px;">、</span></span>32 <span style="display: inline-block; width: 49.02px;"><span style="display: inline-block; transform: scaleX(0.86); transform-origin: 0px 0px;">ビット</span></span><span style="display: inline-block; width: 11.4px;"><span style="display: inline-block; transform: scaleX(0.6); transform-origin: 0px 0px;">、</span></span>48000 Hz (<span style="display: inline-block; width: 81.7px;"><span style="display: inline-block; transform: scaleX(0.86); transform-origin: 0px 0px;">スタジオの</span></span>音質)</i>
<i class="t" style="font-size: 18.5px; color: rgb(26, 26, 26); left: 103.97px; top: 1024.32px; transform: scaleX(0.8997);">2 <span style="display: inline-block; width: 65.36px;"><span style="display: inline-block; transform: scaleX(0.86); transform-origin: 0px 0px;">チャネル</span></span><span style="display: inline-block; width: 11.4px;"><span style="display: inline-block; transform: scaleX(0.6); transform-origin: 0px 0px;">、</span></span>32 <span style="display: inline-block; width: 49.02px;"><span style="display: inline-block; transform: scaleX(0.86); transform-origin: 0px 0px;">ビット</span></span><span style="display: inline-block; width: 11.4px;"><span style="display: inline-block; transform: scaleX(0.6); transform-origin: 0px 0px;">、</span></span>96000 Hz (<span style="display: inline-block; width: 81.7px;"><span style="display: inline-block; transform: scaleX(0.86); transform-origin: 0px 0px;">スタジオの</span></span>音質)</i>
<i class="t" style="font-size: 18.5px; color: rgb(26, 26, 26); left: 103.97px; top: 1049.32px; transform: scaleX(0.9022);">2 <span style="display: inline-block; width: 65.36px;"><span style="display: inline-block; transform: scaleX(0.86); transform-origin: 0px 0px;">チャネル</span></span><span style="display: inline-block; width: 11.4px;"><span style="display: inline-block; transform: scaleX(0.6); transform-origin: 0px 0px;">、</span></span>32 <span style="display: inline-block; width: 49.02px;"><span style="display: inline-block; transform: scaleX(0.86); transform-origin: 0px 0px;">ビット</span></span><span style="display: inline-block; width: 11.4px;"><span style="display: inline-block; transform: scaleX(0.6); transform-origin: 0px 0px;">、</span></span>192000 Hz (<span style="display: inline-block; width: 81.7px;"><span style="display: inline-block; transform: scaleX(0.86); transform-origin: 0px 0px;">スタジオの</span></span>音質)</i>
<i class="t" style="font-size: 18.5px; color: rgb(26, 26, 26); left: 103.97px; top: 1074.32px; transform: scaleX(0.9022);">2 <span style="display: inline-block; width: 65.36px;"><span style="display: inline-block; transform: scaleX(0.86); transform-origin: 0px 0px;">チャネル</span></span><span style="display: inline-block; width: 11.4px;"><span style="display: inline-block; transform: scaleX(0.6); transform-origin: 0px 0px;">、</span></span>32 <span style="display: inline-block; width: 49.02px;"><span style="display: inline-block; transform: scaleX(0.86); transform-origin: 0px 0px;">ビット</span></span><span style="display: inline-block; width: 11.4px;"><span style="display: inline-block; transform: scaleX(0.6); transform-origin: 0px 0px;">、</span></span>384000 Hz (<span style="display: inline-block; width: 81.7px;"><span style="display: inline-block; transform: scaleX(0.86); transform-origin: 0px 0px;">スタジオの</span></span>音質)</i>



</body></html>
